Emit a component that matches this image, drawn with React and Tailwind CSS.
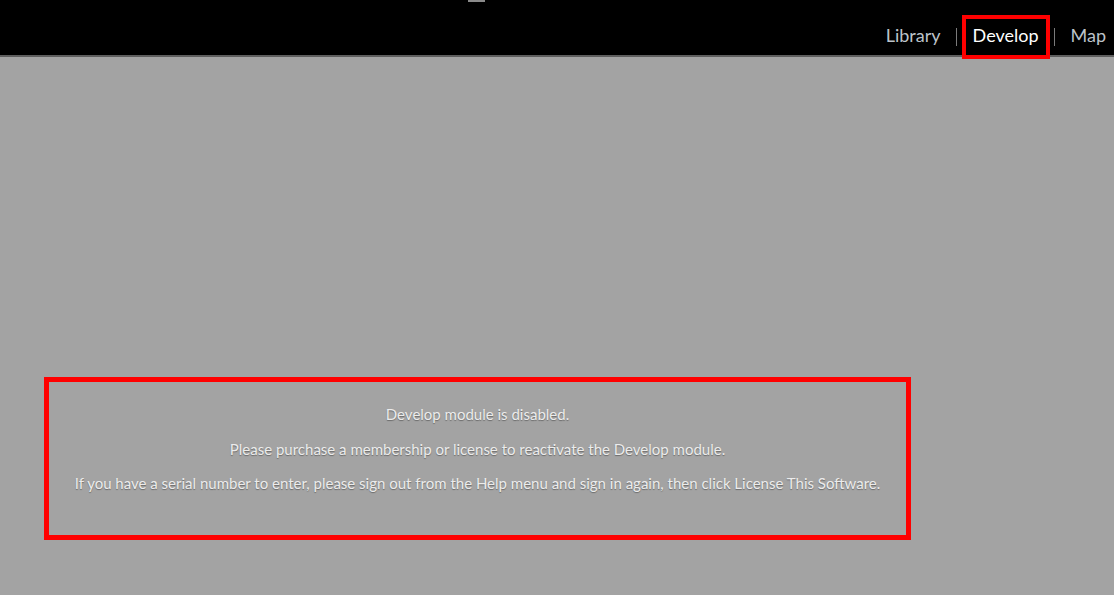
export default function App() {
  return (
    <div className="w-[1114px] h-[595px] bg-[#a3a3a3] overflow-hidden" style={{ fontFamily: 'Lato, "Open Sans", sans-serif' }}>
      {/* top bar */}
      <div className="relative h-[57px] bg-black border-b-2 border-[#5e5e5e] flex items-start justify-end pr-[8px]">
        <div className="absolute left-[468px] top-0 w-[17px] h-[2px] bg-[#8a8a8a]" />
        <div className="flex items-center mt-[15px] text-[18px] text-[#bcc3ca]">
          <span className="pr-[15px] pb-[3px]">Library</span>
          <span className="w-px h-[18px] bg-[#7a7a7a]" />
          <span className="ml-[5px] mr-[4px] h-[44px] px-[7px] pb-[3px] flex items-center border-4 border-[#ff0000] text-white relative z-10">
            Develop
          </span>
          <span className="w-px h-[18px] bg-[#7a7a7a]" />
          <span className="pl-[16px] pb-[3px]">Map</span>
        </div>
      </div>

      {/* message */}
      <div className="pt-[320px] pl-[44px]">
        <div className="w-[867px] h-[163px] border-[5px] border-[#ff0000] flex flex-col items-center pt-[21px] gap-[12px] text-[15px] text-[#ececec] [text-shadow:0_1px_1px_rgba(0,0,0,0.35)]">
          <p>Develop module is disabled.</p>
          <p>Please purchase a membership or license to reactivate the Develop module.</p>
          <p>If you have a serial number to enter, please sign out from the Help menu and sign in again, then click License This Software.</p>
        </div>
      </div>
    </div>
  );
}
